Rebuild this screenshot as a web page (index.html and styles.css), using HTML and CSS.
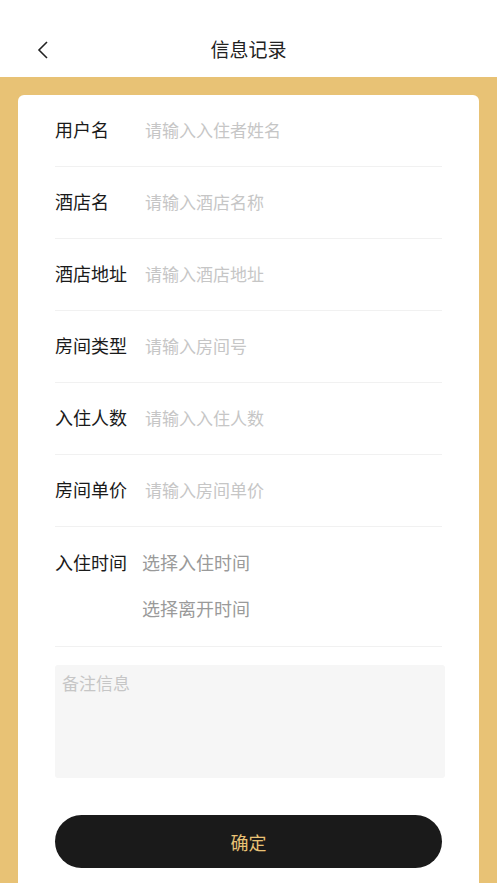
FILE: index.html
```html
<!DOCTYPE html>
<html lang="zh-CN">
  <head>
    <meta charset="UTF-8" />
    <meta name="viewport" content="width=device-width, initial-scale=1.0" />
    <title>信息记录</title>
    <link rel="stylesheet" href="styles.css">
  </head>
  <body>
    <div class="nav-bar">
      <button class="back-button">
        <svg width="12" height="20" viewBox="0 0 12 20">
          <path d="M10 2 L2 10 L10 18" fill="none" stroke="#222" stroke-width="1.6" />
        </svg>
      </button>
      <h1>信息记录</h1>
    </div>

    <div class="page">
      <div class="form-card">
        <div class="form-row">
          <label>用户名</label>
          <span class="placeholder">请输入入住者姓名</span>
        </div>
        <div class="form-row">
          <label>酒店名</label>
          <span class="placeholder">请输入酒店名称</span>
        </div>
        <div class="form-row">
          <label>酒店地址</label>
          <span class="placeholder">请输入酒店地址</span>
        </div>
        <div class="form-row">
          <label>房间类型</label>
          <span class="placeholder">请输入房间号</span>
        </div>
        <div class="form-row">
          <label>入住人数</label>
          <span class="placeholder">请输入入住人数</span>
        </div>
        <div class="form-row">
          <label>房间单价</label>
          <span class="placeholder">请输入房间单价</span>
        </div>
        <div class="form-row time-row">
          <label>入住时间</label>
          <div class="time-picks">
            <span>选择入住时间</span>
            <span>选择离开时间</span>
          </div>
        </div>

        <div class="remark">备注信息</div>

        <button class="submit-button">确定</button>
      </div>
    </div>
  </body>
</html>
```

FILE: styles.css
```css
body {
  margin: 0;
  background-color: #e8c275;
  font-family: "Noto Sans CJK SC", "Noto Sans", sans-serif;
  color: #1a1a1a;
  height: 883px;
  overflow: hidden;
}
.nav-bar {
  position: relative;
  height: 77px;
  background: #fff;
  display: flex;
  align-items: flex-end;
  justify-content: center;
}
.nav-bar h1 {
  margin: 0 0 16px;
  font-size: 19px;
  font-weight: normal;
  line-height: 24px;
  color: #222;
}
.back-button {
  position: absolute;
  left: 37px;
  top: 40px;
  background: none;
  border: none;
  padding: 0;
}
.page {
  padding: 18px 18px 0;
}
.form-card {
  background: #fff;
  border-radius: 6px;
  padding: 0 37px 40px;
}
.form-row {
  display: flex;
  align-items: center;
  box-sizing: border-box;
  height: 72px;
  padding-bottom: 3px;
  border-bottom: 1px solid #f1f1f1;
}
.form-row label {
  width: 90px;
  font-size: 18px;
}
.placeholder {
  font-size: 17px;
  color: #c6c6c6;
}
.time-row {
  height: auto;
  align-items: flex-start;
  padding: 23px 0 26px;
}
.time-row label {
  width: 87px;
  line-height: 24px;
}
.time-picks {
  display: flex;
  flex-direction: column;
  gap: 22px;
  font-size: 18px;
  line-height: 24px;
  color: #9a9a9a;
}
.remark {
  margin: 18px -3px 0 0;
  height: 113px;
  box-sizing: border-box;
  padding: 6px 7px;
  background: #f6f6f6;
  border-radius: 3px;
  font-size: 17px;
  line-height: 24px;
  color: #c6c6c6;
}
.submit-button {
  display: block;
  width: 100%;
  height: 53px;
  margin-top: 37px;
  border: none;
  border-radius: 27px;
  background: #1a1a1a;
  color: #e8c275;
  font-family: inherit;
  font-size: 18px;
}
```
